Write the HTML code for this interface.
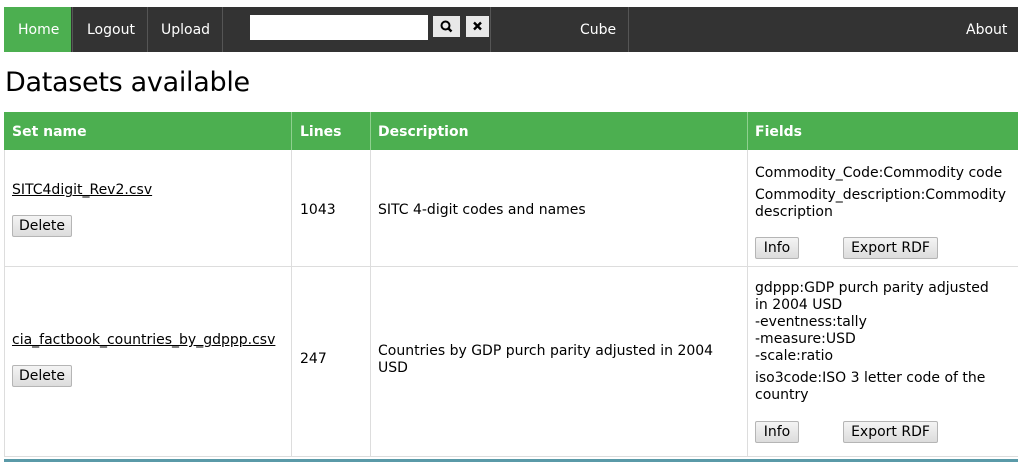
<!DOCTYPE html>
<html><head><meta charset="utf-8"><style>
body{margin:0;width:1024px;height:462px;background:#fff;font-family:"DejaVu Sans",Verdana,sans-serif;font-size:14px;color:#000;position:relative;overflow:hidden}
.a{position:absolute;white-space:nowrap}
.nav{position:absolute;left:4px;top:7px;width:1014px;height:45px;background:#333}
.nav .a{color:#fff;top:15px;font-size:14px}
.div{position:absolute;top:0;width:1px;height:45px;background:#555}
.btn{position:absolute;background:linear-gradient(#f4f4f4,#dcdcdc);border:1px solid #b5b5b5;border-radius:2px;font-size:14px;text-align:center;line-height:20px;height:20px;color:#000}
.v{position:absolute;width:1px;background:#ddd}
.h{position:absolute;height:1px;background:#ddd;left:4px;width:1014px}
.th{color:#fff;font-weight:bold;top:124px}
</style></head><body>
<div class="nav">
<div style="position:absolute;left:0;top:0;width:67px;height:45px;background:#4CAF50"></div>
<span class="a" style="left:14px">Home</span>
<div class="div" style="left:68px"></div>
<span class="a" style="left:83px">Logout</span>
<div class="div" style="left:143px"></div>
<span class="a" style="left:157px">Upload</span>
<div class="div" style="left:218px"></div>
<div style="position:absolute;left:246px;top:8px;width:178px;height:25px;background:#fff"></div>
<div style="position:absolute;left:429px;top:9px;width:27px;height:21px;background:#e8e8e8">
<svg width="27" height="21" viewBox="0 0 27 21"><circle cx="12.5" cy="9.5" r="4" fill="none" stroke="#000" stroke-width="2"/><line x1="15.5" y1="12.5" x2="18.5" y2="15.5" stroke="#000" stroke-width="2.4"/></svg></div>
<div style="position:absolute;left:462px;top:9px;width:23px;height:21px;background:#e8e8e8">
<svg width="23" height="21" viewBox="0 0 23 21"><path d="M8 6.5L15 13.5M15 6.5L8 13.5" stroke="#000" stroke-width="2.4"/></svg></div>
<div class="div" style="left:486px"></div>
<span class="a" style="left:576px">Cube</span>
<div class="div" style="left:624px"></div>
<span class="a" style="left:962px">About</span>
</div>
<div class="a" style="left:5px;top:67px;font-size:27px;letter-spacing:-0.3px">Datasets available</div>
<div style="position:absolute;left:4px;top:112px;width:1014px;height:38px;background:#4CAF50"></div>
<div style="position:absolute;left:291px;top:112px;width:1px;height:38px;background:#8fd08f"></div>
<div style="position:absolute;left:370px;top:112px;width:1px;height:38px;background:#8fd08f"></div>
<div style="position:absolute;left:747px;top:112px;width:1px;height:38px;background:#8fd08f"></div>
<span class="a th" style="left:12px">Set name</span>
<span class="a th" style="left:300px">Lines</span>
<span class="a th" style="left:378px">Description</span>
<span class="a th" style="left:755px">Fields</span>
<div class="v" style="left:4px;top:150px;height:306px"></div>
<div class="v" style="left:291px;top:150px;height:306px"></div>
<div class="v" style="left:370px;top:150px;height:306px"></div>
<div class="v" style="left:747px;top:150px;height:306px"></div>
<div class="h" style="top:266px"></div>
<div class="h" style="top:456px"></div>
<div style="position:absolute;left:4px;top:459px;width:1014px;height:3px;background:#5a9aa8"></div>
<span class="a" style="left:12px;top:182px;text-decoration:underline">SITC4digit_Rev2.csv</span>
<div class="btn" style="left:12px;top:215px;width:58px">Delete</div>
<span class="a" style="left:300px;top:202px">1043</span>
<span class="a" style="left:378px;top:202px">SITC 4-digit codes and names</span>
<span class="a" style="left:755px;top:165px">Commodity_Code:Commodity code</span>
<span class="a" style="left:755px;top:187px">Commodity_description:Commodity</span>
<span class="a" style="left:755px;top:204px">description</span>
<div class="btn" style="left:755px;top:237px;width:42px">Info</div>
<div class="btn" style="left:843px;top:237px;width:93px">Export RDF</div>
<span class="a" style="left:12px;top:332px;text-decoration:underline">cia_factbook_countries_by_gdppp.csv</span>
<div class="btn" style="left:12px;top:365px;width:58px">Delete</div>
<span class="a" style="left:300px;top:351px">247</span>
<span class="a" style="left:378px;top:343px">Countries by GDP purch parity adjusted in 2004</span>
<span class="a" style="left:378px;top:360px">USD</span>
<div class="a" style="left:755px;top:280px;line-height:17px">gdppp:GDP purch parity adjusted<br>in 2004 USD<br>-eventness:tally<br>-measure:USD<br>-scale:ratio</div>
<div class="a" style="left:755px;top:370px;line-height:17px">iso3code:ISO 3 letter code of the<br>country</div>
<div class="btn" style="left:755px;top:421px;width:42px">Info</div>
<div class="btn" style="left:843px;top:421px;width:93px">Export RDF</div>
</body></html>
